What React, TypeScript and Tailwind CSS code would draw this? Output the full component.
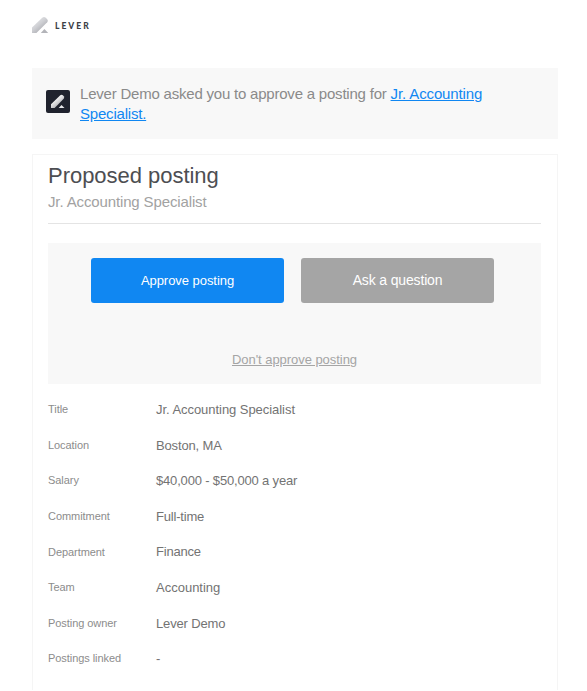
import { FC } from "react";

const details = [
  { label: "Title", value: "Jr. Accounting Specialist", tracking: "tracking-[-0.05px]" },
  { label: "Location", value: "Boston, MA", tracking: "tracking-[-0.15px]" },
  { label: "Salary", value: "$40,000 - $50,000 a year", tracking: "tracking-[-0.17px]" },
  { label: "Commitment", value: "Full-time", tracking: "tracking-[-0.2px]" },
  { label: "Department", value: "Finance", tracking: "tracking-[-0.2px]" },
  { label: "Team", value: "Accounting", tracking: "tracking-normal" },
  { label: "Posting owner", value: "Lever Demo", tracking: "tracking-[-0.15px]" },
  { label: "Postings linked", value: "-", tracking: "tracking-normal" },
];

const LeverLogo: FC = () => (
  <svg width="17" height="17" viewBox="0 0 17 17" aria-hidden="true">
    <defs>
      <linearGradient id="bar" x1="4" y1="4" x2="10" y2="11" gradientUnits="userSpaceOnUse">
        <stop offset="0" stopColor="#dedfe2" />
        <stop offset="0.5" stopColor="#cfd0d4" />
        <stop offset="1" stopColor="#b8b9be" />
      </linearGradient>
    </defs>
    <path d="M0 10.5 10.2 0.8Q12 -0.6 13.8 0.8L15.2 2.2Q16.4 3.7 15.2 5.2L4.4 16H0Z" fill="url(#bar)" />
    <path d="M8.8 16 12.4 12 16.2 16Z" fill="#b3b4b9" />
  </svg>
);

const LeverBadge: FC = () => (
  <svg width="24" height="24" viewBox="0 0 24 24" aria-hidden="true">
    <defs>
      <linearGradient id="badgeBar" x1="9" y1="8" x2="14" y2="14" gradientUnits="userSpaceOnUse">
        <stop offset="0" stopColor="#fff" />
        <stop offset="1" stopColor="#b9babd" />
      </linearGradient>
    </defs>
    <rect width="24" height="23" rx="2" fill="#20232e" />
    <path d="M5 14.3 14.3 5.3Q15.6 4.4 16.9 5.3L17.8 6.3Q18.6 7.6 17.7 8.8L8.6 18H5Z" fill="url(#badgeBar)" />
    <path d="M12.7 18 15.5 14.9 18.5 18Z" fill="#e9e9eb" />
  </svg>
);

const App: FC = () => {
  return (
    <main className="h-[691px] overflow-hidden bg-white pl-8 pr-[29px] pt-[17px] font-['Liberation_Sans',sans-serif]">
      <header className="flex h-[51px] items-start">
        <LeverLogo />
        <span className="ml-[6px] mt-[4px] font-[Lato,sans-serif] text-[8.5px] font-black leading-[11px] tracking-[2px] text-[#3d3f47]">
          LEVER
        </span>
      </header>
      <section className="flex h-[71px] items-start bg-[#f8f8f8] pl-3.5">
        <div className="mt-[22px]">
          <LeverBadge />
        </div>
        <p className="ml-2.5 mt-4 text-[15px] leading-5 tracking-[-0.21px] text-[#8a8a8a]">
          Lever Demo asked you to approve a posting for{" "}
          <a href="#" className="tracking-[-0.12px] text-[#1087f2] underline">
            Jr. Accounting
            <br />
            <span className="tracking-[-0.2px]">Specialist.</span>
          </a>
        </p>
      </section>
      <section className="mt-[15px] h-[536px] border border-b-0 border-[#f5f5f5] pl-[15px] pr-4 pt-[7px]">
        <h1 className="text-[22px] leading-7 tracking-[-0.03px] text-[#4d4e52]">Proposed posting</h1>
        <p className="border-b border-[#e4e4e4] pb-[9px] text-[15px] leading-6 tracking-[-0.13px] text-[#a2a2a2]">
          Jr. Accounting Specialist
        </p>
        <div className="mt-[19px] flex h-[141px] flex-col bg-[#f8f8f8] pt-[15px]">
          <div className="flex gap-[17px] pl-[43px]">
            <button className="h-[45px] w-[193px] rounded-[3px] bg-[#1087f2] text-[13px] tracking-[-0.05px] text-white">
              Approve posting
            </button>
            <button className="h-[45px] w-[193px] rounded-[3px] bg-[#a5a5a5] text-[14px] tracking-[-0.15px] text-white">
              Ask a question
            </button>
          </div>
          <a href="#" className="mt-[47px] text-center text-[13px] leading-5 tracking-[-0.05px] text-[#a5a5a5] underline">
            Don't approve posting
          </a>
        </div>
        <dl className="mt-[7.6px]">
          {details.map(({ label, value, tracking }) => (
            <div key={label} className="flex h-[35.6px] items-center">
              <dt className="w-[108px] text-[11px] tracking-[-0.06px] text-[#8c8c8c]">{label}</dt>
              <dd className={`pt-[0.8px] text-[13px] text-[#737373] ${tracking}`}>{value}</dd>
            </div>
          ))}
        </dl>
      </section>
    </main>
  );
};

export default App;
